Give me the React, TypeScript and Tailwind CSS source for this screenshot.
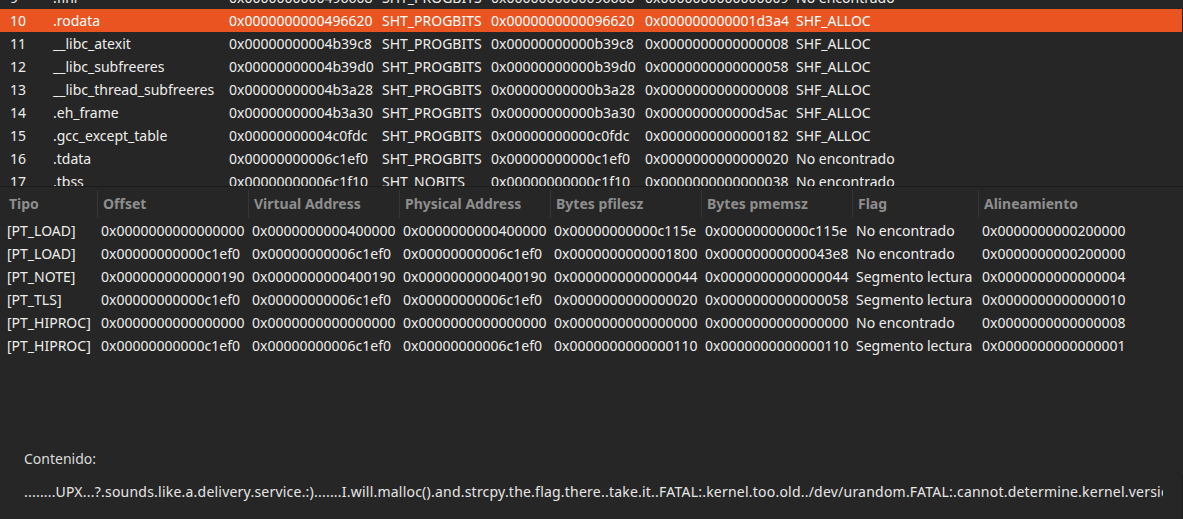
const sections = [
  ['9', '.fini', '0x0000000000496608', 'SHT_PROGBITS', '0x0000000000096608', '0x0000000000000009', 'No encontrado'],
  ['10', '.rodata', '0x0000000000496620', 'SHT_PROGBITS', '0x0000000000096620', '0x000000000001d3a4', 'SHF_ALLOC'],
  ['11', '__libc_atexit', '0x00000000004b39c8', 'SHT_PROGBITS', '0x00000000000b39c8', '0x0000000000000008', 'SHF_ALLOC'],
  ['12', '__libc_subfreeres', '0x00000000004b39d0', 'SHT_PROGBITS', '0x00000000000b39d0', '0x0000000000000058', 'SHF_ALLOC'],
  ['13', '__libc_thread_subfreeres', '0x00000000004b3a28', 'SHT_PROGBITS', '0x00000000000b3a28', '0x0000000000000008', 'SHF_ALLOC'],
  ['14', '.eh_frame', '0x00000000004b3a30', 'SHT_PROGBITS', '0x00000000000b3a30', '0x000000000000d5ac', 'SHF_ALLOC'],
  ['15', '.gcc_except_table', '0x00000000004c0fdc', 'SHT_PROGBITS', '0x00000000000c0fdc', '0x0000000000000182', 'SHF_ALLOC'],
  ['16', '.tdata', '0x00000000006c1ef0', 'SHT_PROGBITS', '0x00000000000c1ef0', '0x0000000000000020', 'No encontrado'],
  ['17', '.tbss', '0x00000000006c1f10', 'SHT_NOBITS', '0x00000000000c1f10', '0x0000000000000038', 'No encontrado'],
]

const segHeaders = ['Tipo', 'Offset', 'Virtual Address', 'Physical Address', 'Bytes pfilesz', 'Bytes pmemsz', 'Flag', 'Alineamiento']

const segments = [
  ['[PT_LOAD]', '0x0000000000000000', '0x0000000000400000', '0x0000000000400000', '0x00000000000c115e', '0x00000000000c115e', 'No encontrado', '0x0000000000200000'],
  ['[PT_LOAD]', '0x00000000000c1ef0', '0x00000000006c1ef0', '0x00000000006c1ef0', '0x0000000000001800', '0x00000000000043e8', 'No encontrado', '0x0000000000200000'],
  ['[PT_NOTE]', '0x0000000000000190', '0x0000000000400190', '0x0000000000400190', '0x0000000000000044', '0x0000000000000044', 'Segmento lectura', '0x0000000000000004'],
  ['[PT_TLS]', '0x00000000000c1ef0', '0x00000000006c1ef0', '0x00000000006c1ef0', '0x0000000000000020', '0x0000000000000058', 'Segmento lectura', '0x0000000000000010'],
  ['[PT_HIPROC]', '0x0000000000000000', '0x0000000000000000', '0x0000000000000000', '0x0000000000000000', '0x0000000000000000', 'No encontrado', '0x0000000000000008'],
  ['[PT_HIPROC]', '0x00000000000c1ef0', '0x00000000006c1ef0', '0x00000000006c1ef0', '0x0000000000000110', '0x0000000000000110', 'Segmento lectura', '0x0000000000000001'],
]

const content =
  '........UPX...?.sounds.like.a.delivery.service.:).......I.will.malloc().and.strcpy.the.flag.there..take.it..FATAL:.kernel.too.old../dev/urandom.FATAL:.cannot.determine.kernel.version..unexpected.reloc.type.in.static.binary.'

export default function App() {
  return (
    <div
      className="w-[1183px] h-[519px] overflow-hidden bg-[#262626] text-[#eeeeec] text-[14px] flex flex-col"
      style={{ fontFamily: '"Noto Sans", "Open Sans", sans-serif' }}
    >
      {/* sections tree, scrolled a bit */}
      <div className="h-[186px] overflow-hidden shrink-0 w-[1182px]">
        <div className="-mt-[14px]">
          {sections.map((r) => (
            <div
              key={r[0]}
              className={
                'grid grid-cols-[50px_176px_153px_109px_154px_151px_1fr] h-[23px] leading-[23px] whitespace-nowrap ' +
                (r[0] === '10' ? 'bg-[#e95420] text-white' : '')
              }
            >
              <div className="pl-[10px]">{r[0]}</div>
              <div className="pl-[3px] overflow-hidden">{r[1]}</div>
              <div className="pl-[3px]">{r[2]}</div>
              <div className="pl-[3px]">{r[3]}</div>
              <div className="pl-[3px]">{r[4]}</div>
              <div className="pl-[3px]">{r[5]}</div>
              <div className="pl-[3px]">{r[6]}</div>
            </div>
          ))}
        </div>
      </div>

      {/* segments table */}
      <div className="border-t border-[#1b1b1b]">
        <div className="grid grid-cols-[98px_151px_151px_151px_151px_151px_126px_1fr] h-[32px] items-start whitespace-nowrap font-bold text-[#8e8e8e]">
          {segHeaders.map((h, i) => (
            <div key={h} className={'mt-[3px] h-[28px] leading-[28px] border-r border-[#363636] ' + (i === 0 ? 'pl-[9px]' : 'pl-[5px]') + (i === 7 ? ' border-r-0' : '')}>
              {h}
            </div>
          ))}
        </div>
        {segments.map((r, idx) => (
          <div key={idx} className="grid grid-cols-[98px_151px_151px_151px_151px_151px_126px_1fr] h-[23px] leading-[23px] whitespace-nowrap">
            {r.map((c, i) => (
              <div key={i} className={i === 0 ? 'pl-[7px]' : 'pl-[3px]'}>
                {c}
              </div>
            ))}
          </div>
        ))}
      </div>

      {/* content */}
      <div className="flex-1 flex flex-col justify-end pb-[11px]">
        <div className="pl-[24px] text-[#dcdcdc] leading-[20px] mb-[6px]">Contenido:</div>
        <div className="flex items-center">
          <div className="ml-[24px] w-[1139px] overflow-hidden whitespace-nowrap leading-[20px] tracking-[0.22px] text-[#e6e6e6]">{content}</div>
          <div className="ml-auto w-px h-[44px] bg-[#1c1c1c] self-end -mb-[11px]" />
        </div>
      </div>
    </div>
  )
}
